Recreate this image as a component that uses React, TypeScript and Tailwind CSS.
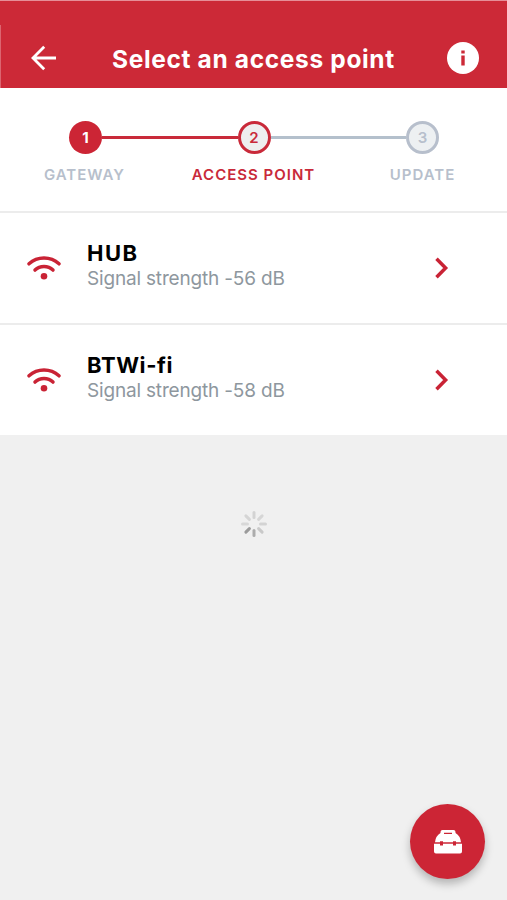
import React from 'react';

const accessPoints = [
  { name: 'HUB', signal: -56, tracking: 'tracking-[1.5px]' },
  { name: 'BTWi-fi', signal: -58, tracking: 'tracking-[0.6px]' },
];

const spokes = ['#d3d3d3', '#d6d6d6', '#d3d3d3', '#c9c9c9', '#acacac', '#9b9b9b', '#d8d8d8', '#d5d5d5'];

const BackIcon = () => (
  <svg className="h-7 w-7" viewBox="0 0 28 28" fill="none" stroke="white" strokeWidth="2.8">
    <path d="M27 14H4M15.200 2.800L4 14L15.200 25.200" />
  </svg>
);

const InfoIcon = () => (
  <svg className="h-8 w-8" viewBox="0 0 32 32">
    <circle cx="16" cy="16" r="16" fill="white" />
    <path d="M14.300 8.400h3.400v3h-3.400zM14.300 13.600h3.400v10h-3.400z" fill="#cc2937" />
  </svg>
);

const WifiIcon = () => (
  <svg className="h-6 w-[34px]" viewBox="0 0 34 24" fill="none" stroke="#c92335" strokeWidth="3.5" strokeLinecap="round">
    <path d="M2 7.8C10.500 .2 23.500 .2 32 7.800" />
    <path d="M8 14.100C13 9.200 21 9.200 26 14.100" />
    <circle cx="17" cy="20.200" r="3.300" fill="#c92335" stroke="none" />
  </svg>
);

const ChevronIcon = () => (
  <svg className="h-6 w-4" viewBox="0 0 16 24" fill="none" stroke="#c92335" strokeWidth="3.500">
    <path d="M2.500 2.800L11.600 12l-9.100 9.200" />
  </svg>
);

const ToolboxIcon = () => (
  <svg className="h-6 w-7" viewBox="0 0 28 24" fill="white">
    <path
      fillRule="evenodd"
      d="M6.500 3V2Q6.500 0 8.500 0h11Q21.500 0 21.500 2v1Q26.500 6 27 12.200h-5v-1h-3v1H9v-1H6v1H1Q1.500 6 6.500 3ZM10 2.700v1.200h8V2.700Z"
    />
    <path d="M0 13.800h6v1.800h3v-1.800h10v1.800h3v-1.800h6v7.700q0 2-2 2H2q-2 0-2-2Z" />
  </svg>
);

const Spinner = () => (
  <svg className="h-7 w-7" viewBox="0 0 28 28" strokeWidth="3" strokeLinecap="round">
    {spokes.map((color, i) => (
      <line key={i} x1="14" y1="2.500" x2="14" y2="7.500" stroke={color} transform={`rotate(${i * 45} 14 14)`} />
    ))}
  </svg>
);

const App = () => {
  return (
    <div className="relative flex h-[900px] w-[507px] flex-col overflow-hidden bg-[#f0f0f0] font-['Inter',sans-serif]">
      {/* Header */}
      <header className="flex h-[88px] flex-col border-t border-[#e68e98] bg-[#cc2937]">
        <div className="mt-6 flex flex-1 items-center border-l border-[#dc6570] pt-0.5 pr-7 pl-7">
          <BackIcon />
          <h1 className="ml-[55px] flex-1 pt-0.5 text-[24.5px] leading-8 font-bold tracking-[0.65px] whitespace-nowrap text-white">
            Select an access point
          </h1>
          <InfoIcon />
        </div>
      </header>

      {/* Progress steps */}
      <section className="h-[125px] border-b-2 border-[#ececec] bg-white pt-[33px]">
        <div className="flex items-center pr-[68px] pl-[69px]">
          <span className="flex h-[33px] w-[33px] items-center justify-center rounded-full bg-[#cc2535] pt-px text-[15px] font-bold text-white">1</span>
          <div className="h-[3px] flex-1 bg-[#c92a3a]" />
          <span className="flex h-[33px] w-[33px] items-center justify-center rounded-full border-[3px] border-[#c92a3a] bg-[#eeeeef] pt-px text-[15px] font-semibold text-[#c92a3a]">2</span>
          <div className="h-[3px] flex-1 bg-[#b4c0cc]" />
          <span className="flex h-[33px] w-[33px] items-center justify-center rounded-full border-[3px] border-[#b7bfcc] bg-[#edf0f2] pt-px text-[15px] font-semibold text-[#b7bfcc]">3</span>
        </div>
        <div className="mt-[11px] flex text-[15px] leading-5 font-semibold whitespace-nowrap">
          <p className="w-[169px] text-center tracking-[1px] text-[#b7bfcc]">GATEWAY</p>
          <p className="w-[169px] text-center tracking-[1px] text-[#c92a3a]">ACCESS POINT</p>
          <p className="w-[169px] text-center tracking-[1px] text-[#b7bfcc]">UPDATE</p>
        </div>
      </section>

      {/* Access points */}
      <ul>
        {accessPoints.map((point, index) => (
          <li key={point.name} className={`flex items-center bg-white pr-[57px] pl-[27px] ${index === 0 ? 'h-[112px] border-b-2 border-[#ececec]' : 'h-[110px]'}`}>
            <WifiIcon />
            <div className="ml-[26px] flex-1 pb-1.5">
              <h2 className={`text-[22px] leading-[26px] font-bold text-black ${point.tracking}`}>{point.name}</h2>
              <p className="text-[19px] leading-[25px] tracking-[-0.18px] text-[#8e979e]">Signal strength {point.signal} dB</p>
            </div>
            <ChevronIcon />
          </li>
        ))}
      </ul>

      <div className="mt-[75px] flex justify-center">
        <Spinner />
      </div>

      <button className="absolute right-[22px] bottom-[21px] flex h-[75px] w-[75px] items-center justify-center rounded-full bg-[#cc2535] shadow-[0_5px_9px_rgba(0,0,0,0.25)]">
        <ToolboxIcon />
      </button>
    </div>
  );
};

export default App;
